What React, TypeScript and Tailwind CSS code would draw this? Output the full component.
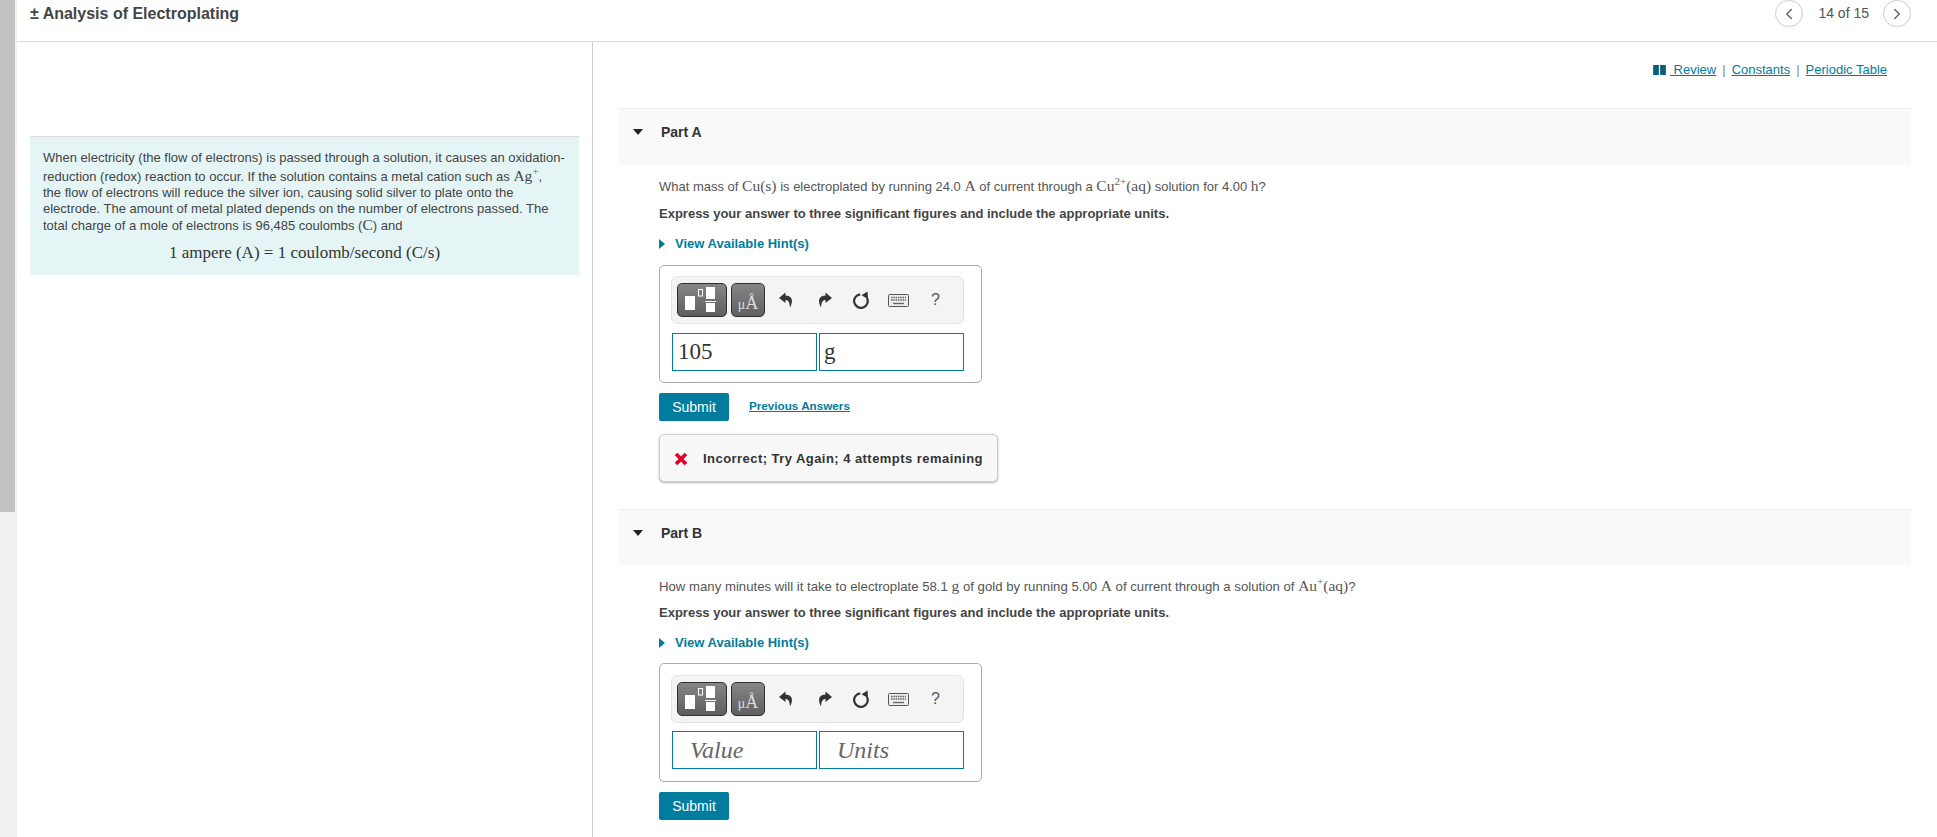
import React from 'react';
import { ChevronLeft, ChevronRight } from 'lucide-react';

// Serif span for the math bits (MathJax in the original)
const M = ({ children }: { children: React.ReactNode }) => (
    <span className="font-['Liberation_Serif',serif] text-[15.5px] leading-none">{children}</span>
);

const Sup = ({ children }: { children: React.ReactNode }) => (
    <span className="align-[6px] text-[11px] leading-none text-[#666]">{children}</span>
);

const TemplateIcon = () => (
    <svg width="36" height="28" viewBox="0 0 36 28">
        <rect x="1" y="10" width="10" height="14" fill="#fff" />
        <rect x="14.5" y="3.5" width="4" height="6.5" fill="none" stroke="#fff" strokeWidth="1" />
        <rect x="22" y="1" width="9" height="12" fill="#fff" />
        <rect x="21" y="15" width="11" height="1" fill="#fff" />
        <rect x="22" y="17" width="9" height="9" fill="#fff" />
    </svg>
);

const ArrowIcon = ({ flip = false }: { flip?: boolean }) => (
    <svg width="14" height="16" viewBox="0 0 14 16" className={flip ? '-scale-x-100' : ''}>
        <path d="M6.5 0.5 L0 6 L6.5 11 L6.5 8 C9.5 8 10.5 10 11 15.5 C14.5 9 13.5 4 6.5 3.5 Z" fill="#333" />
    </svg>
);

const ReloadIcon = () => (
    <svg width="18" height="18" viewBox="0 0 18 18">
        <path d="M15 7 A6.8 6.8 0 1 1 8.2 3.3" fill="none" stroke="#333" strokeWidth="2.2" />
        <path d="M9.5 4.2 L15.5 0.5 L16 8 Z" fill="#333" />
    </svg>
);

const KeyboardIcon = () => (
    <svg width="21" height="13" viewBox="0 0 21 13">
        <rect x="0.5" y="0.5" width="20" height="12" rx="1" fill="#eee" stroke="#555" />
        <path d="M3 3.5H18M3 6H18" stroke="#666" strokeWidth="1.4" strokeDasharray="1.5 0.8" />
        <path d="M5 9.5H16" stroke="#666" strokeWidth="1.4" />
    </svg>
);

const Toolbar = () => (
    <div className="flex h-[48px] w-[293px] items-center rounded-[6px] border border-[#e3e3e3] bg-[#f4f4f4] pl-[5px]">
        <div className="flex h-[34px] w-[50px] items-center justify-center rounded-[5px] border border-[#2f2f2f] bg-gradient-to-b from-[#868686] to-[#5e5e5e]">
            <TemplateIcon />
        </div>
        <div className="ml-[4px] flex h-[34px] w-[34px] items-end justify-center rounded-[5px] border border-[#2f2f2f] bg-gradient-to-b from-[#868686] to-[#606060] pb-[4px] font-['Liberation_Serif',serif] leading-none text-[#dcdcdc]">
            <span className="text-[14px]">μ</span>
            <span className="text-[18px]">Å</span>
        </div>
        <div className="ml-[14px] flex w-[14px] justify-center"><ArrowIcon /></div>
        <div className="ml-[25px] flex w-[14px] justify-center"><ArrowIcon flip /></div>
        <div className="ml-[20px]"><ReloadIcon /></div>
        <div className="ml-[18px]"><KeyboardIcon /></div>
        <span className="ml-[22px] text-[16px] text-[#555]">?</span>
    </div>
);

type Spacing = {
    bar: string;
    question: string;
    express: string;
    box: string;
    boxInner: string;
    inputs: string;
};

// The two parts differ by a pixel or so in the original
const partA: Spacing = {
    bar: 'h-[57px]',
    question: 'mt-[11px] text-[13px]',
    express: 'mt-[8px]',
    box: 'mt-[11px]',
    boxInner: 'pt-[10px] pb-[11px]',
    inputs: 'mt-[9px]',
};

const partB: Spacing = {
    bar: 'h-[56px]',
    question: 'mt-[11px] text-[13.2px]',
    express: 'mt-[7px]',
    box: 'mt-[10px]',
    boxInner: 'pt-[11px] pb-[12px]',
    inputs: 'mt-[8px]',
};

type PartProps = {
    name: string;
    question: React.ReactNode;
    spacing: Spacing;
    value?: string;
    units?: string;
    children?: React.ReactNode;
};

const Part = ({ name, question, spacing, value, units, children }: PartProps) => (
    <section>
        <div className={`flex border-t border-[#eeeeee] bg-[#f9f9f9] pt-[14px] ${spacing.bar}`}>
            <span className="ml-[14px] mt-[6px] h-0 w-0 border-x-[5.5px] border-t-[6px] border-x-transparent border-t-[#222]" />
            <h2 className="ml-[18px] text-[14px] leading-[18px] font-bold text-[#333]">{name}</h2>
        </div>
        <div className="pl-[40px]">
            <p className={`h-[20px] whitespace-nowrap leading-[20px] text-[#555] ${spacing.question}`}>{question}</p>
            <p className={`h-[20px] whitespace-nowrap text-[13px] leading-[20px] font-bold text-[#444] ${spacing.express}`}>
                Express your answer to three significant figures and include the appropriate units.
            </p>
            <div className="mt-[10px] flex h-[20px] items-center">
                <span className="h-0 w-0 border-y-[5px] border-l-[6px] border-y-transparent border-l-[#007c9e]" />
                <span className="ml-[10px] text-[13px] font-bold text-[#007c9e]">View Available Hint(s)</span>
            </div>
            <div className={`w-[323px] rounded-[5px] border border-[#aaaaaa] pl-[11px] ${spacing.box} ${spacing.boxInner}`}>
                <Toolbar />
                <div className={`ml-[1px] flex gap-[2px] font-['Liberation_Serif',serif] ${spacing.inputs}`}>
                    <div className={`flex h-[38px] w-[145px] items-center border border-[#007c9e] ${value ? 'pl-[5px] text-[23px] text-[#333]' : 'pl-[17px] text-[24px] italic text-[#666]'}`}>
                        {value ?? 'Value'}
                    </div>
                    <div className={`flex h-[38px] w-[145px] items-center border border-[#007c9e] ${units ? 'pl-[4px] text-[23px] text-[#333]' : 'pl-[17px] text-[24px] italic text-[#666]'}`}>
                        {units ?? 'Units'}
                    </div>
                </div>
            </div>
            <div className="mt-[10px] flex items-start">
                <button className="h-[28px] w-[70px] rounded-[2px] bg-[#007c9e] text-[14px] text-white">Submit</button>
                {children}
            </div>
        </div>
    </section>
);

export default function App() {
    return (
        <div className="flex h-[837px] overflow-hidden bg-white font-['Liberation_Sans',Arial,sans-serif]">
            {/* Scrollbar */}
            <div className="flex h-full w-[17px] shrink-0 flex-col bg-[#f1f1f1]">
                <div className="h-[512px] w-[15px] bg-[#c1c1c1]" />
            </div>

            <div className="flex min-w-0 flex-1 flex-col">
                <header className="flex h-[42px] shrink-0 items-start justify-between border-b border-[#dddddd]">
                    <h1 className="ml-[13px] mt-[4px] text-[16px] leading-[20px] font-bold text-[#444]">± Analysis of Electroplating</h1>
                    <div className="mr-[26px] flex items-center">
                        <div className="flex h-[27px] w-[28px] items-center justify-center rounded-full border border-[#cccccc]">
                            <ChevronLeft className="h-[18px] w-[18px] text-[#666]" />
                        </div>
                        <span className="ml-[15px] mr-[14px] text-[14px] text-[#555]">14 of 15</span>
                        <div className="flex h-[27px] w-[28px] items-center justify-center rounded-full border border-[#cccccc]">
                            <ChevronRight className="h-[18px] w-[18px] text-[#666]" />
                        </div>
                    </div>
                </header>

                <div className="flex min-h-0 flex-1">
                    {/* Intro panel */}
                    <aside className="w-[576px] shrink-0 border-r border-[#cccccc] pl-[13px] pr-[13px] pt-[94px]">
                        <div className="h-[139px] border-t border-[#dddddd] bg-[#e5f5f6] px-[13px] pt-[13px] text-[13px] leading-[16px] text-[#444]">
                            <p className="whitespace-nowrap">
                                When electricity (the flow of electrons) is passed through a solution, it causes an oxidation-<br />
                                reduction (redox) reaction to occur. If the solution contains a metal cation such as <M>Ag<Sup>+</Sup></M>,<br />
                                the flow of electrons will reduce the silver ion, causing solid silver to plate onto the<br />
                                electrode. The amount of metal plated depends on the number of electrons passed. The<br />
                                total charge of a mole of electrons is 96,485 coulombs (<M>C</M>) and
                            </p>
                            <p className="mt-[9px] text-center font-['Liberation_Serif',serif] text-[17px] leading-[20px] text-[#333]">
                                1 ampere (A) = 1 coulomb/second (C/s)
                            </p>
                        </div>
                    </aside>

                    {/* Questions */}
                    <main className="min-w-0 flex-1 pl-[26px] pr-[26px]">
                        <div className="flex h-[66px] items-start justify-end pr-[24px] pt-[19px] text-[13px] leading-[18px] text-[#007c9e]">
                            <svg width="13" height="10" viewBox="0 0 14 11" className="mr-[4px] mt-[4px]">
                                <path d="M0 0H6.3V11H0ZM7.7 0H14V11H7.7Z" fill="#0b5f7c" />
                            </svg>
                            <a className="underline">&nbsp;Review</a>
                            <span className="mx-[6px] text-[#888]">|</span>
                            <a className="underline">Constants</a>
                            <span className="mx-[6px] text-[#888]">|</span>
                            <a className="underline">Periodic Table</a>
                        </div>

                        <Part
                            name="Part A"
                            value="105"
                            units="g"
                            spacing={partA}
                            question={<>What mass of <M>Cu(s)</M> is electroplated by running 24.0 <M>A</M> of current through a <M>Cu<Sup>2+</Sup>(aq)</M> solution for 4.00 <M>h</M>?</>}
                        >
                            <a className="ml-[20px] mt-[5px] text-[11.7px] leading-[16px] font-bold text-[#007c9e] underline">Previous Answers</a>
                        </Part>

                        <div className="ml-[40px] mt-[13px] flex h-[48px] w-[339px] items-center rounded-[5px] border border-[#cccccc] bg-[#f8f8f8] pt-[1px] shadow-[0_1px_2px_rgba(0,0,0,0.3)]">
                            <svg width="14" height="14" viewBox="0 0 14 14" className="ml-[14px]">
                                <path d="M2 2L12 12M12 2L2 12" stroke="#e2002b" strokeWidth="3.6" />
                            </svg>
                            <span className="ml-[15px] text-[13px] font-bold tracking-[0.45px] text-[#333]">Incorrect; Try Again; 4 attempts remaining</span>
                        </div>

                        <div className="mt-[27px]">
                            <Part
                                name="Part B"
                                spacing={partB}
                                question={<>How many minutes will it take to electroplate 58.1 <M>g</M> of gold by running 5.00 <M>A</M> of current through a solution of <M>Au<Sup>+</Sup>(aq)</M>?</>}
                            />
                        </div>
                    </main>
                </div>
            </div>
        </div>
    );
}
